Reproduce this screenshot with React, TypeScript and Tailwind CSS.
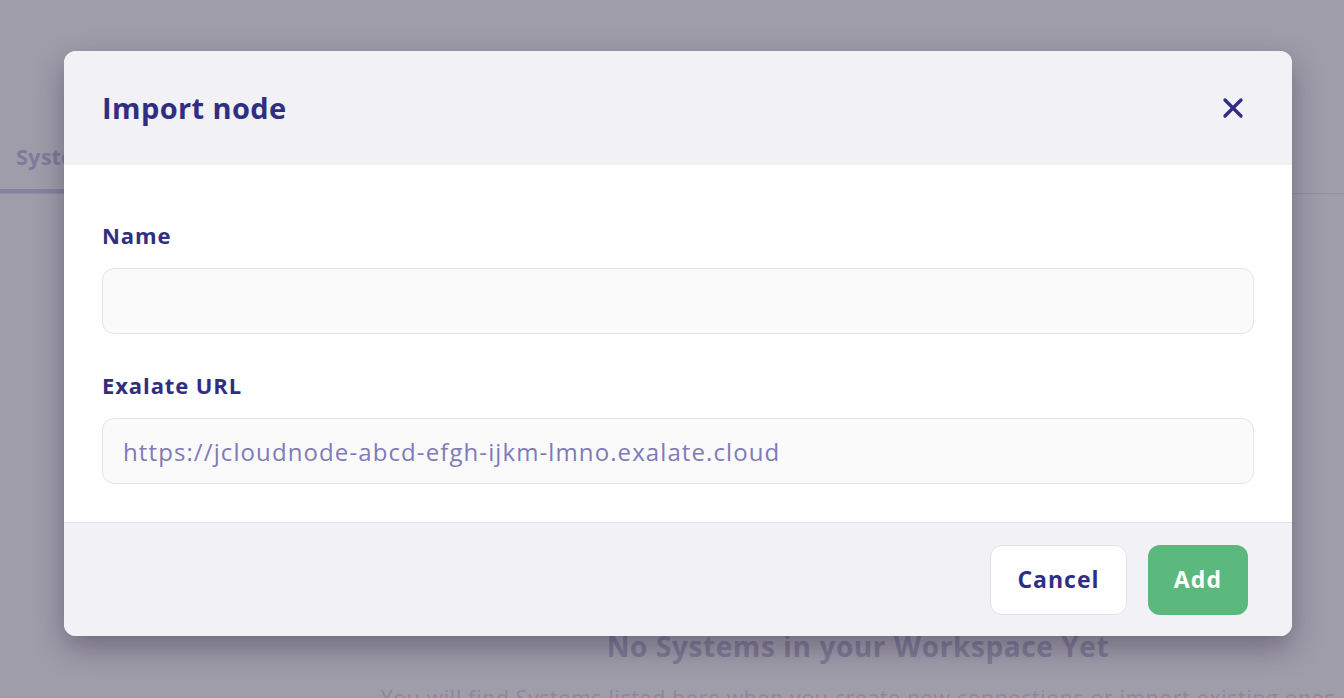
import { useState } from 'react'

const font = { fontFamily: '"Open Sans", "Noto Sans", sans-serif' }

function CloseIcon() {
  return (
    <svg width="22" height="22" viewBox="0 0 22 22" fill="none" stroke="currentColor" strokeWidth="3.4" strokeLinecap="round">
      <path d="M3 3L19 19M19 3L3 19" />
    </svg>
  )
}

export default function App() {
  const [name, setName] = useState('')
  const [url, setUrl] = useState('')

  return (
    <div className="relative h-[698px] w-full overflow-hidden bg-white text-[#312e81]" style={font}>
      {/* page behind the modal */}
      <div className="flex flex-col h-full">
        <div className="h-[120px]" />
        <div className="flex border-b border-[#e8e7f0]">
          <div className="px-4 pt-5 pb-[16px] border-b-4 border-[#d4d0ec] text-[22px] font-bold text-[#c8c4e4]">Systems</div>
        </div>
        <div className="flex-1 flex flex-col items-center justify-end pl-[372px] -mb-[16px]">
          <div className="text-[28px] font-bold tracking-[0.6px] text-[#cac7dc] whitespace-nowrap">No Systems in your Workspace Yet</div>
          <div className="mt-4 text-[21px] tracking-[0.8px] text-[#dcdae6] whitespace-nowrap">
            You will find Systems listed here when you create new connections or import existing ones
          </div>
        </div>
      </div>

      {/* overlay */}
      <div className="absolute inset-0 bg-[#1c1636]/[0.42]">
        <div className="ml-[64px] mt-[51px] w-[1228px] rounded-[12px] overflow-hidden bg-white shadow-[0_12px_30px_rgba(20,15,40,0.35)]">
          <div className="flex items-center justify-between h-[114px] bg-[#f2f1f6] pl-[38px] pr-[48px]">
            <h2 className="text-[29px] font-bold text-[#312e81] tracking-[0.4px]">Import node</h2>
            <button className="text-[#312e81]">
              <CloseIcon />
            </button>
          </div>

          <div className="flex flex-col px-[38px] pt-[59px] pb-[38px]">
            <label className="text-[22px] font-bold leading-none tracking-[0.9px]">Name</label>
            <input
              value={name}
              onChange={e => setName(e.target.value)}
              className="mt-[22px] h-[66px] w-[1152px] rounded-[12px] border border-[#e4e3ee] bg-[#fafafb] px-5 text-[24px] outline-none"
            />
            <label className="mt-[40px] text-[22px] font-bold leading-none tracking-[0.9px]">Exalate URL</label>
            <input
              value={url}
              onChange={e => setUrl(e.target.value)}
              placeholder="https://jcloudnode-abcd-efgh-ijkm-lmno.exalate.cloud"
              className="mt-[22px] h-[66px] w-[1152px] rounded-[12px] border border-[#e4e3ee] bg-[#fafafb] px-5 text-[24px] tracking-[1.1px] outline-none placeholder:text-[#7f7bb5]"
            />
          </div>

          <div className="flex justify-end items-center gap-[21px] h-[114px] border-t border-[#e2e1ea] bg-[#f2f1f6] pr-[44px]">
            <button className="h-[70px] w-[137px] rounded-[12px] border border-[#e2e1ea] bg-white text-[23px] font-bold tracking-[1px] text-[#312e81]">
              Cancel
            </button>
            <button className="h-[70px] w-[100px] rounded-[12px] bg-[#5cb97e] text-[23px] font-bold tracking-[1.2px] text-white">
              Add
            </button>
          </div>
        </div>
      </div>
    </div>
  )
}
